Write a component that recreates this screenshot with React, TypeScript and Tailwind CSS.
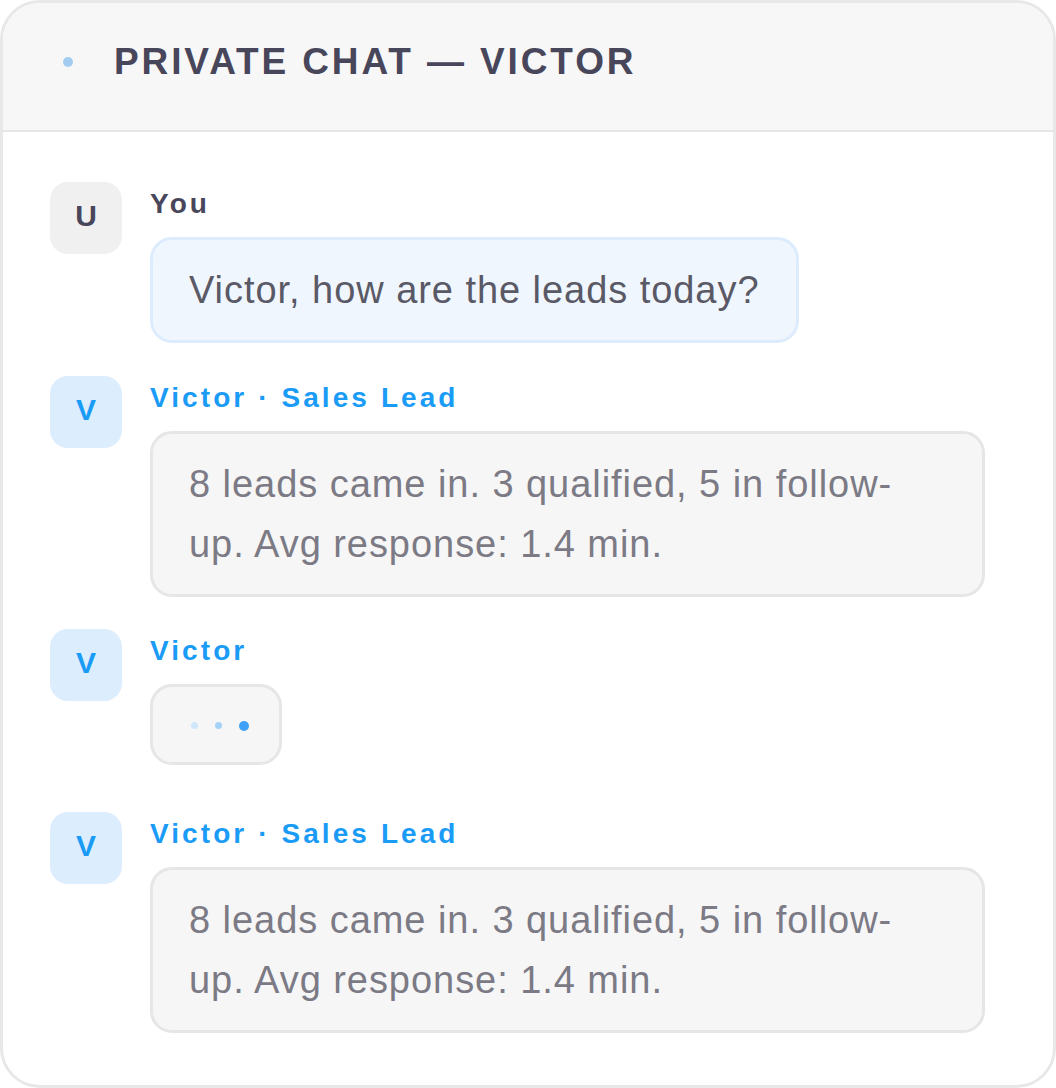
import React from 'react';

type Msg = {
  id: number;
  who: 'user' | 'victor';
  name: string;
  text?: string;
  typing?: boolean;
};

const messages: Msg[] = [
  { id: 1, who: 'user', name: 'You', text: 'Victor, how are the leads today?' },
  {
    id: 2,
    who: 'victor',
    name: 'Victor · Sales Lead',
    text: '8 leads came in. 3 qualified, 5 in follow-up. Avg response: 1.4 min.',
  },
  { id: 3, who: 'victor', name: 'Victor', typing: true },
  {
    id: 4,
    who: 'victor',
    name: 'Victor · Sales Lead',
    text: '8 leads came in. 3 qualified, 5 in follow-up. Avg response: 1.4 min.',
  },
];

function Avatar({ who }: { who: Msg['who'] }) {
  const isUser = who === 'user';
  return (
    <div
      className={`flex h-[72px] w-[72px] shrink-0 items-center justify-center rounded-[18px] pb-[5px] text-[30px] font-bold ${
        isUser ? 'bg-[#f0f0f1] text-[#48465a]' : 'bg-[#dcedfd] text-[#1a9bf6]'
      }`}
    >
      {isUser ? 'U' : 'V'}
    </div>
  );
}

function Typing() {
  return (
    <div className="flex h-[81px] w-[132px] items-center gap-[17px] rounded-[22px] border-[3px] border-[#e6e6e6] bg-[#f6f6f6] pl-[38px] pt-[2px]">
      <span className="h-[7px] w-[7px] rounded-full bg-[#cfe6fb]" />
      <span className="h-[7px] w-[7px] rounded-full bg-[#a7d2f8]" />
      <span className="h-[10px] w-[10px] rounded-full bg-[#3ea0f6]" />
    </div>
  );
}

function Message({ msg }: { msg: Msg }) {
  const isUser = msg.who === 'user';
  return (
    <div className="flex gap-[28px]">
      <Avatar who={msg.who} />
      <div className="min-w-0 flex-1">
        <div
          className={`mt-[2px] h-[40px] text-[28px] font-bold leading-[40px] tracking-[0.11em] ${
            isUser ? 'text-[#48465a]' : 'text-[#1a9bf6]'
          }`}
        >
          {msg.name}
        </div>
        <div className="mt-[13px]">
          {msg.typing ? (
            <Typing />
          ) : (
            <div
              className={`inline-block rounded-[22px] border-[3px] px-[36px] py-[20px] text-[38px] leading-[60px] tracking-[0.025em] ${
                isUser
                  ? 'border-[#dcecfd] bg-[#f0f6fe] text-[#5a5966]'
                  : 'border-[#e6e6e6] bg-[#f6f6f6] text-[#7b7a85]'
              }`}
            >
              {msg.text}
            </div>
          )}
        </div>
      </div>
    </div>
  );
}

export default function App() {
  return (
    <div
      className="h-[1088px] w-[1056px] bg-white"
      style={{ fontFamily: '"Liberation Sans", Arial, sans-serif' }}
    >
      <div className="h-full overflow-hidden rounded-[40px] border-[3px] border-[#e8e8e8] bg-white">
        <div className="flex h-[129px] items-center gap-[41px] border-b-[2px] border-[#e6e6e6] bg-[#f7f7f7] pb-[10px] pl-[60px]">
          <span className="h-[10px] w-[10px] rounded-full bg-[#a3cdf0]" />
          <h1 className="text-[37px] font-bold tracking-[0.078em] text-[#48465a]">
            PRIVATE CHAT — VICTOR
          </h1>
        </div>
        <div className="flex flex-col pl-[47px] pr-[68px] pt-[50px]">
          <div className="mb-[33px]">
            <Message msg={messages[0]} />
          </div>
          <div className="mb-[32px]">
            <Message msg={messages[1]} />
          </div>
          <div className="mb-[47px]">
            <Message msg={messages[2]} />
          </div>
          <Message msg={messages[3]} />
        </div>
      </div>
    </div>
  );
}
